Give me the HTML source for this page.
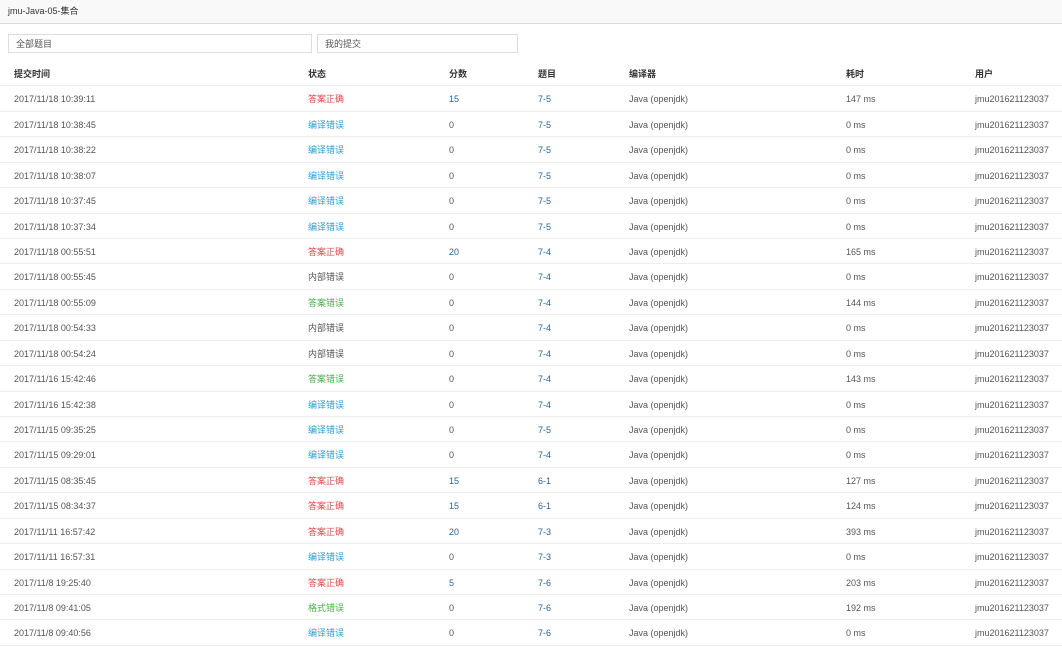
<!DOCTYPE html>
<html><head><meta charset="utf-8"><style>
body{margin:0;width:1062px;height:647px;overflow:hidden;background:#fff;font-family:"Liberation Sans","Noto Sans CJK SC",sans-serif;font-size:9px;color:#555}
.top{height:23px;border-bottom:1px solid #ddd;background:#f9f9f9;line-height:23px;padding-left:8px;font-size:9px;color:#333}
.in{position:absolute;top:34px;height:19px;border:1px solid #ddd;line-height:19px;padding-left:7px;color:#555;box-sizing:border-box}
.r{position:absolute;left:0;width:1062px;height:25.43px;border-bottom:1px solid #eee;box-sizing:border-box}
.r span{position:absolute;top:1px;line-height:25px;white-space:nowrap}
.h span{font-weight:bold;color:#333}
.red{color:#e8474a}.blu{color:#2a9fd6}.grn{color:#4cae4c}.lk{color:#2a6496}
</style></head><body>
<div class="top">jmu-Java-05-集合</div>
<div class="in" style="left:8px;width:304px">全部题目</div>
<div class="in" style="left:317px;width:201px">我的提交</div>
<div id="t"></div>
<script>
var rows=[
["2017/11/18 10:39:11","答案正确","red","15","7-5","147 ms"],
["2017/11/18 10:38:45","编译错误","blu","0","7-5","0 ms"],
["2017/11/18 10:38:22","编译错误","blu","0","7-5","0 ms"],
["2017/11/18 10:38:07","编译错误","blu","0","7-5","0 ms"],
["2017/11/18 10:37:45","编译错误","blu","0","7-5","0 ms"],
["2017/11/18 10:37:34","编译错误","blu","0","7-5","0 ms"],
["2017/11/18 00:55:51","答案正确","red","20","7-4","165 ms"],
["2017/11/18 00:55:45","内部错误","","0","7-4","0 ms"],
["2017/11/18 00:55:09","答案错误","grn","0","7-4","144 ms"],
["2017/11/18 00:54:33","内部错误","","0","7-4","0 ms"],
["2017/11/18 00:54:24","内部错误","","0","7-4","0 ms"],
["2017/11/16 15:42:46","答案错误","grn","0","7-4","143 ms"],
["2017/11/16 15:42:38","编译错误","blu","0","7-4","0 ms"],
["2017/11/15 09:35:25","编译错误","blu","0","7-5","0 ms"],
["2017/11/15 09:29:01","编译错误","blu","0","7-4","0 ms"],
["2017/11/15 08:35:45","答案正确","red","15","6-1","127 ms"],
["2017/11/15 08:34:37","答案正确","red","15","6-1","124 ms"],
["2017/11/11 16:57:42","答案正确","red","20","7-3","393 ms"],
["2017/11/11 16:57:31","编译错误","blu","0","7-3","0 ms"],
["2017/11/8 19:25:40","答案正确","red","5","7-6","203 ms"],
["2017/11/8 09:41:05","格式错误","grn","0","7-6","192 ms"],
["2017/11/8 09:40:56","编译错误","blu","0","7-6","0 ms"]];
var X=[14,308,449,538,629,846,975],h='';
h+='<div class="r h" style="top:61px">'+["提交时间","状态","分数","题目","编译器","耗时","用户"].map((t,i)=>'<span style="left:'+X[i]+'px">'+t+'</span>').join('')+'</div>';
rows.forEach((r,k)=>{var top=61+25.43*(k+1);
h+='<div class="r" style="top:'+top+'px"><span style="left:14px">'+r[0]+'</span><span class="'+r[2]+'" style="left:308px">'+r[1]+'</span><span class="'+(r[3]!="0"?"lk":"")+'" style="left:449px">'+r[3]+'</span><span class="lk" style="left:538px">'+r[4]+'</span><span style="left:629px">Java (openjdk)</span><span style="left:846px">'+r[5]+'</span><span style="left:975px">jmu201621123037</span></div>';});
document.getElementById('t').innerHTML=h;
</script>
</body></html>
